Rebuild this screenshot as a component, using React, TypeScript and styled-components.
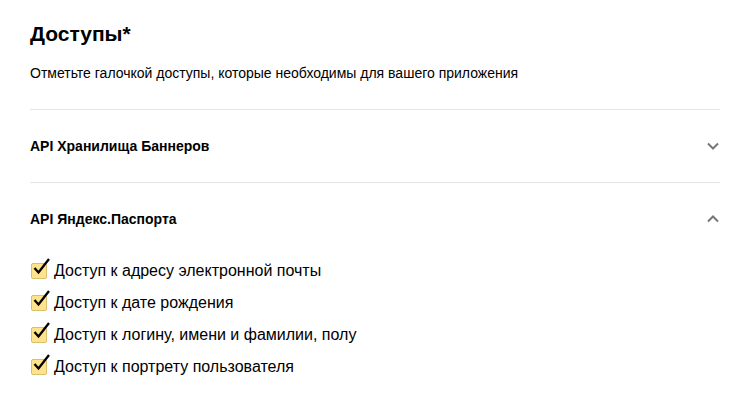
import styled, { createGlobalStyle } from "styled-components";

const GlobalStyle = createGlobalStyle`
  body {
    margin: 0;
    background: #fff;
    font-family: "Liberation Sans", Arial, sans-serif;
    color: #000;
  }
`;

const Container = styled.div`
  padding: 19px 30px 0 30px;
  width: 690px;
`;

const Title = styled.h2`
  margin: 0;
  font-size: 21px;
  line-height: 30px;
  font-weight: bold;
`;

const Hint = styled.p`
  margin: 15px 0 0 0;
  font-size: 14px;
  line-height: 18px;
  color: #000;
`;

const Section = styled.div`
  border-top: 1px solid #e5e5e5;
  margin-top: 27px;
  & + & {
    margin-top: 0;
  }
`;

const SectionHeader = styled.div`
  display: flex;
  align-items: center;
  justify-content: space-between;
  height: 72px;
  font-size: 14px;
  font-weight: bold;
`;

const Chevron = styled.svg`
  width: 14px;
  height: 10px;
`;

const List = styled.ul`
  list-style: none;
  margin: 0;
  padding: 0;
`;

const Item = styled.li`
  display: flex;
  align-items: center;
  height: 32px;
  font-size: 16px;
  color: #000;
`;

const Box = styled.span`
  position: relative;
  width: 16px;
  height: 16px;
  box-sizing: border-box;
  border: 1px solid #d6bf6e;
  background: #ffe38a;
  border-radius: 2px;
  margin: 0 7px 0 1px;
  flex-shrink: 0;
`;

const Mark = styled.svg`
  position: absolute;
  left: 1px;
  top: -6px;
  width: 17px;
  height: 18px;
  overflow: visible;
`;

function ChevronIcon({ up }: { up?: boolean }) {
  return (
    <Chevron viewBox="0 0 14 10">
      <path
        d={up ? "M2 7.5 L7 2.5 L12 7.5" : "M2 2.5 L7 7.5 L12 2.5"}
        fill="none"
        stroke="#777"
        strokeWidth="2"
      />
    </Chevron>
  );
}

function Check({ label }: { label: string }) {
  return (
    <Item>
      <Box>
        <Mark viewBox="0 0 17 18">
          <path d="M1.5 10 L5.5 14.5 L16 1" fill="none" stroke="#000" strokeWidth="2.3" />
        </Mark>
      </Box>
      {label}
    </Item>
  );
}

const items = [
  "Доступ к адресу электронной почты",
  "Доступ к дате рождения",
  "Доступ к логину, имени и фамилии, полу",
  "Доступ к портрету пользователя",
];

export default function App() {
  return (
    <Container>
      <GlobalStyle />
      <Title>Доступы*</Title>
      <Hint>Отметьте галочкой доступы, которые необходимы для вашего приложения</Hint>
      <Section>
        <SectionHeader>
          API Хранилища Баннеров
          <ChevronIcon />
        </SectionHeader>
      </Section>
      <Section>
        <SectionHeader>
          API Яндекс.Паспорта
          <ChevronIcon up />
        </SectionHeader>
        <List>
          {items.map((label) => (
            <Check key={label} label={label} />
          ))}
        </List>
      </Section>
    </Container>
  );
}
